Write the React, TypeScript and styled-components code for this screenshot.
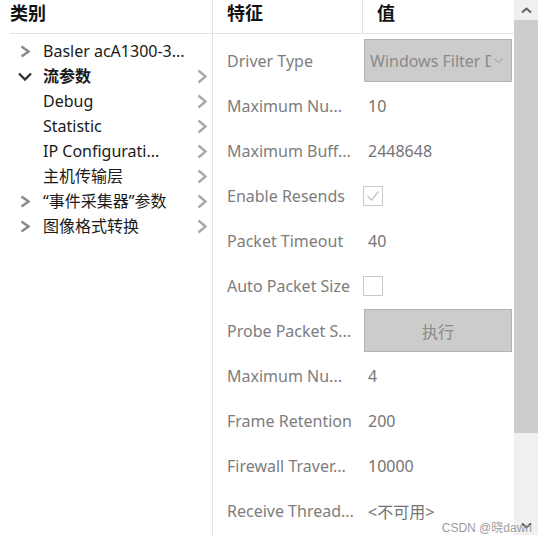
import React from 'react';
import styled, { createGlobalStyle } from 'styled-components';

const GlobalStyle = createGlobalStyle`
  body {
    margin: 0;
    background: #ffffff;
    font-family: "Noto Sans", "Noto Sans CJK SC", sans-serif;
  }
`;

interface TreeItem {
  label: string;
  toggle?: 'closed' | 'open';
  bold?: boolean;
  more?: boolean;
}

interface Feature {
  name: string;
  kind: 'text' | 'select' | 'check' | 'button';
  value?: string;
  checked?: boolean;
}

const treeItems: TreeItem[] = [
  { label: 'Basler acA1300-3...', toggle: 'closed' },
  { label: '流参数', toggle: 'open', bold: true, more: true },
  { label: 'Debug', more: true },
  { label: 'Statistic', more: true },
  { label: 'IP Configurati...', more: true },
  { label: '主机传输层', more: true },
  { label: '“事件采集器”参数', toggle: 'closed', more: true },
  { label: '图像格式转换', toggle: 'closed', more: true },
];

const features: Feature[] = [
  { name: 'Driver Type', kind: 'select', value: 'Windows Filter Driver' },
  { name: 'Maximum Nu...', kind: 'text', value: '10' },
  { name: 'Maximum Buff...', kind: 'text', value: '2448648' },
  { name: 'Enable Resends', kind: 'check', checked: true },
  { name: 'Packet Timeout', kind: 'text', value: '40' },
  { name: 'Auto Packet Size', kind: 'check', checked: false },
  { name: 'Probe Packet S...', kind: 'button', value: '执行' },
  { name: 'Maximum Nu...', kind: 'text', value: '4' },
  { name: 'Frame Retention', kind: 'text', value: '200' },
  { name: 'Firewall Traver...', kind: 'text', value: '10000' },
  { name: 'Receive Thread...', kind: 'text', value: '<不可用>' },
];

const ChevronRight: React.FC<{ color: string; w: number; h: number; stroke: number }> = ({ color, w, h, stroke }) => (
  <svg width={w} height={h} viewBox={`0 0 ${w} ${h}`}>
    <polyline
      points={`1.5,1.5 ${w - 1.5},${h / 2} 1.5,${h - 1.5}`}
      fill="none"
      stroke={color}
      strokeWidth={stroke}
    />
  </svg>
);

const ChevronDown: React.FC<{ color: string; w: number; h: number; stroke: number }> = ({ color, w, h, stroke }) => (
  <svg width={w} height={h} viewBox={`0 0 ${w} ${h}`}>
    <polyline
      points={`1,1.5 ${w / 2},${h - 1.5} ${w - 1},1.5`}
      fill="none"
      stroke={color}
      strokeWidth={stroke}
    />
  </svg>
);

const ChevronUp: React.FC<{ color: string; w: number; h: number; stroke: number }> = ({ color, w, h, stroke }) => (
  <svg width={w} height={h} viewBox={`0 0 ${w} ${h}`}>
    <polyline
      points={`1,${h - 1.5} ${w / 2},1.5 ${w - 1},${h - 1.5}`}
      fill="none"
      stroke={color}
      strokeWidth={stroke}
    />
  </svg>
);

const App: React.FC = () => (
  <>
    <GlobalStyle />
    <Window>
      <CategoryPanel>
        <CategoryHeader>类别</CategoryHeader>
        <Tree>
          {treeItems.map((item, i) => (
            <TreeRow key={i}>
              <ToggleSlot>
                {item.toggle === 'closed' && <ChevronRight color="#8a8a8a" w={10} h={13} stroke={2.4} />}
                {item.toggle === 'open' && <ChevronDown color="#333333" w={14} h={9} stroke={2.4} />}
              </ToggleSlot>
              <TreeLabel $bold={item.bold}>{item.label}</TreeLabel>
              <MoreSlot>{item.more && <ChevronRight color="#a9a9a9" w={10} h={15} stroke={2.4} />}</MoreSlot>
            </TreeRow>
          ))}
        </Tree>
      </CategoryPanel>

      <FeaturePanel>
        <FeatureHeader>
          <HeaderCell $divider>特征</HeaderCell>
          <HeaderCell>值</HeaderCell>
        </FeatureHeader>
        <FeatureList>
          {features.map((f, i) => (
            <FeatureRow key={i}>
              <FeatureName>{f.name}</FeatureName>
              <ValueCell>
                {f.kind === 'text' && <ValueText>{f.value}</ValueText>}
                {f.kind === 'select' && (
                  <SelectBox>
                    <SelectText>{f.value}</SelectText>
                    <SelectArrow>
                      <ChevronDown color="#9a9a9a" w={11} h={7} stroke={1} />
                    </SelectArrow>
                  </SelectBox>
                )}
                {f.kind === 'check' && (
                  <CheckBox>
                    {f.checked && (
                      <svg width="14" height="12" viewBox="0 0 14 12">
                        <polyline points="1.5,6 5.5,10 12.5,1.5" fill="none" stroke="#c2c2c2" strokeWidth="1.3" />
                      </svg>
                    )}
                  </CheckBox>
                )}
                {f.kind === 'button' && <ExecButton>{f.value}</ExecButton>}
              </ValueCell>
            </FeatureRow>
          ))}
        </FeatureList>
      </FeaturePanel>

      <ScrollBar>
        <ScrollArrow>
          <ChevronUp color="#606060" w={11} h={7} stroke={2} />
        </ScrollArrow>
        <ScrollThumb />
        <ScrollTrack />
        <ScrollArrow>
          <ChevronDown color="#555555" w={11} h={7} stroke={2} />
        </ScrollArrow>
      </ScrollBar>

      <Watermark>CSDN @晓dawn</Watermark>
    </Window>
  </>
);

const Window = styled.div`
  position: relative;
  display: flex;
  width: 538px;
  height: 535px;
  background: #ffffff;
  overflow: hidden;
`;

const CategoryPanel = styled.div`
  width: 212px;
  flex-shrink: 0;
  border-right: 1px solid #e3e3e3;
  display: flex;
  flex-direction: column;
`;

const CategoryHeader = styled.div`
  box-sizing: border-box;
  height: 34px;
  margin-left: 10px;
  padding-bottom: 7px;
  border-bottom: 1px solid #e3e3e3;
  display: flex;
  align-items: center;
  font-size: 18px;
  font-weight: 700;
  color: #111111;
  line-height: 1;
`;

const Tree = styled.div`
  padding-top: 5px;
  display: flex;
  flex-direction: column;
`;

const TreeRow = styled.div`
  height: 25px;
  display: flex;
  align-items: center;
  padding-left: 14px;
  padding-right: 5px;
`;

const ToggleSlot = styled.div`
  width: 22px;
  margin-right: 7px;
  display: flex;
  align-items: center;
  justify-content: center;
`;

const TreeLabel = styled.span<{ $bold?: boolean }>`
  flex: 1;
  font-size: 16px;
  line-height: 25px;
  color: #1a1a1a;
  font-weight: ${p => (p.$bold ? 700 : 400)};
  white-space: nowrap;
  overflow: hidden;
`;

const MoreSlot = styled.div`
  width: 10px;
  display: flex;
  align-items: center;
  justify-content: center;
`;

const FeaturePanel = styled.div`
  width: 301px;
  flex-shrink: 0;
  display: flex;
  flex-direction: column;
`;

const FeatureHeader = styled.div`
  box-sizing: border-box;
  height: 34px;
  display: grid;
  grid-template-columns: 150px 151px;
  border-bottom: 1px solid #e3e3e3;
`;

const HeaderCell = styled.div<{ $divider?: boolean }>`
  display: flex;
  align-items: center;
  padding-left: 14px;
  padding-bottom: 7px;
  font-size: 18px;
  font-weight: 700;
  color: #111111;
  line-height: 1;
  border-right: ${p => (p.$divider ? '1px solid #e3e3e3' : 'none')};
`;

const FeatureList = styled.div`
  padding-top: 4px;
  display: flex;
  flex-direction: column;
`;

const FeatureRow = styled.div`
  height: 45px;
  display: grid;
  grid-template-columns: 150px 151px;
  align-items: center;
`;

const FeatureName = styled.div`
  padding-left: 14px;
  font-size: 16px;
  color: #7d7d7d;
  white-space: nowrap;
  overflow: hidden;
`;

const ValueCell = styled.div`
  display: flex;
  align-items: center;
  height: 100%;
`;

const ValueText = styled.span`
  padding-left: 5px;
  font-size: 16px;
  color: #747474;
  white-space: nowrap;
`;

const SelectBox = styled.div`
  box-sizing: border-box;
  width: 148px;
  height: 43px;
  margin-left: 1px;
  background: #cccccc;
  border: 1px solid #b3b3b3;
  display: flex;
  align-items: center;
`;

const SelectText = styled.span`
  width: 121px;
  padding-left: 5px;
  font-size: 16px;
  color: #8a8a8a;
  white-space: nowrap;
  overflow: hidden;
`;

const SelectArrow = styled.span`
  display: flex;
  align-items: center;
  margin-left: 2px;
`;

const CheckBox = styled.div`
  box-sizing: border-box;
  width: 20px;
  height: 20px;
  border: 1px solid #c9c9c9;
  background: #ffffff;
  display: flex;
  align-items: center;
  justify-content: center;
`;

const ExecButton = styled.div`
  box-sizing: border-box;
  width: 148px;
  height: 43px;
  margin-left: 1px;
  background: #cccccc;
  border: 1px solid #b3b3b3;
  display: flex;
  align-items: center;
  justify-content: center;
  font-size: 16px;
  color: #8a8a8a;
`;

const ScrollBar = styled.div`
  width: 24px;
  flex-shrink: 0;
  display: flex;
  flex-direction: column;
  background: #f0f0f0;
`;

const ScrollArrow = styled.div`
  height: 20px;
  display: flex;
  align-items: center;
  justify-content: center;
  padding-left: 1px;
`;

const ScrollThumb = styled.div`
  height: 413px;
  background: #cdcdcd;
`;

const ScrollTrack = styled.div`
  flex: 1;
`;

const Watermark = styled.div`
  position: absolute;
  right: 6px;
  bottom: 0px;
  font-family: "Liberation Sans", "Noto Sans CJK SC", sans-serif;
  font-size: 12px;
  line-height: 14px;
  color: #9c9c9c;
  white-space: nowrap;
`;

export default App;
